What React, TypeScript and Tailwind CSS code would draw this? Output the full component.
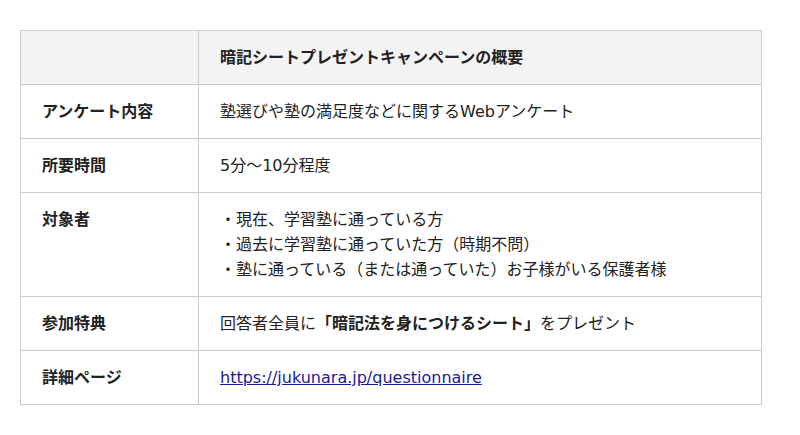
const rows: { label: string; content: React.ReactNode }[] = [
  { label: 'アンケート内容', content: '塾選びや塾の満足度などに関するWebアンケート' },
  { label: '所要時間', content: '5分～10分程度' },
  {
    label: '対象者',
    content: (
      <>
        ・現在、学習塾に通っている方
        <br />
        ・過去に学習塾に通っていた方（時期不問）
        <br />
        ・塾に通っている（または通っていた）お子様がいる保護者様
      </>
    ),
  },
  {
    label: '参加特典',
    content: (
      <>
        回答者全員に<strong className="font-bold">「暗記法を身につけるシート」</strong>をプレゼント
      </>
    ),
  },
  {
    label: '詳細ページ',
    content: (
      <a href="#" className="text-[#1a1a9c] underline">
        https://jukunara.jp/questionnaire
      </a>
    ),
  },
];

export default function App() {
  return (
    <div
      className="min-h-[435px] bg-white px-5 pt-[30px] text-[16px] text-[#222]"
      style={{ fontFamily: '"DejaVu Sans", "Noto Sans CJK JP", sans-serif' }}
    >
      <table className="w-[742px] border-collapse">
        <thead>
          <tr className="bg-[#f3f3f3]">
            <th className="w-[178px] border border-[#cccccc] px-[21px] py-[14px]"></th>
            <th className="border border-[#cccccc] px-[21px] py-[14px] text-left font-bold leading-[25px]">
              暗記シートプレゼントキャンペーンの概要
            </th>
          </tr>
        </thead>
        <tbody>
          {rows.map((row) => (
            <tr key={row.label}>
              <td className="border border-[#cccccc] px-[21px] py-[14px] align-top font-bold leading-[25px]">
                {row.label}
              </td>
              <td className="border border-[#cccccc] px-[21px] py-[14px] align-top leading-[25px]">
                {row.content}
              </td>
            </tr>
          ))}
        </tbody>
      </table>
    </div>
  );
}
